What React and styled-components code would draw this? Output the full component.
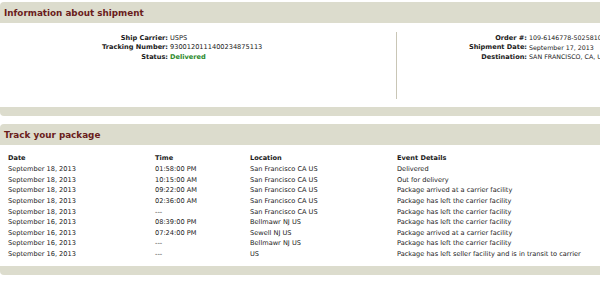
import React from "react";
import styled, { createGlobalStyle } from "styled-components";

const Global = createGlobalStyle`
  html, body { margin: 0; padding: 0; background: #fff; overflow: hidden; }
  body { font-family: "DejaVu Sans", Verdana, sans-serif; color: #1a1a1a; }
`;

const Page = styled.div`
  width: 640px;
  padding-top: 2px;
  display: flex;
  flex-direction: column;
  gap: 8px;
`;

const Panel = styled.section`
  display: flex;
  flex-direction: column;
`;

const Header = styled.div`
  background: #dcdccd;
  height: 21px;
  border-radius: 4px 4px 0 0;
  display: flex;
  align-items: center;
  padding-left: 4px;
`;

const Title = styled.h2`
  margin: 0;
  font-size: 8.8px;
  font-weight: bold;
  color: #6a1c1c;
`;

const Footer = styled.div`
  background: #dcdccd;
  height: 9px;
  border-radius: 0 0 4px 4px;
`;

const InfoBody = styled.div`
  height: 84px;
  display: flex;
  align-items: flex-start;
  padding-top: 9px;
  box-sizing: border-box;
`;

const InfoCol = styled.div`
  width: ${(p) => p.$width}px;
  height: 67px;
  box-sizing: border-box;
  padding-top: 1px;
  border-right: ${(p) => (p.$divider ? "1px solid #c9c6b6" : "none")};
  display: grid;
  grid-template-columns: ${(p) => p.$labelWidth}px auto;
  grid-auto-rows: 9.5px;
  align-content: start;
  align-items: center;
  column-gap: 2px;
  font-size: 6.6px;
`;

const Label = styled.div`
  text-align: right;
  font-weight: bold;
  white-space: nowrap;
`;

const Value = styled.div`
  white-space: nowrap;
  font-size: ${(p) => (p.$small ? "6.3px" : "6.6px")};
  color: ${(p) => (p.$status ? "#2b8a2b" : "#1a1a1a")};
  font-weight: ${(p) => (p.$status ? "bold" : "normal")};
`;

const TrackBody = styled.div`
  padding: 8px 0 7px 8px;
`;

const Table = styled.table`
  border-collapse: collapse;
  font-size: 6.6px;
  & td, & th {
    padding: 0;
    height: 10.65px;
    text-align: left;
    white-space: nowrap;
    vertical-align: middle;
  }
  & th { font-weight: bold; }
`;

const info = {
  left: [
    ["Ship Carrier:", "USPS"],
    ["Tracking Number:", "9300120111400234875113"],
    ["Status:", "Delivered", true],
  ],
  right: [
    ["Order #:", "109-6146778-5025810"],
    ["Shipment Date:", "September 17, 2013"],
    ["Destination:", "SAN FRANCISCO, CA, US"],
  ],
};

const rows = [
  ["September 18, 2013", "01:58:00 PM", "San Francisco CA US", "Delivered"],
  ["September 18, 2013", "10:15:00 AM", "San Francisco CA US", "Out for delivery"],
  ["September 18, 2013", "09:22:00 AM", "San Francisco CA US", "Package arrived at a carrier facility"],
  ["September 18, 2013", "02:36:00 AM", "San Francisco CA US", "Package has left the carrier facility"],
  ["September 18, 2013", "---", "San Francisco CA US", "Package has left the carrier facility"],
  ["September 16, 2013", "08:39:00 PM", "Bellmawr NJ US", "Package has left the carrier facility"],
  ["September 16, 2013", "07:24:00 PM", "Sewell NJ US", "Package arrived at a carrier facility"],
  ["September 16, 2013", "---", "Bellmawr NJ US", "Package has left the carrier facility"],
  ["September 16, 2013", "---", "US", "Package has left seller facility and is in transit to carrier"],
];

export default function App() {
  return (
    <>
      <Global />
      <Page>
        <Panel>
          <Header><Title>Information about shipment</Title></Header>
          <InfoBody>
            <InfoCol $width={397} $labelWidth={168} $divider>
              {info.left.map(([l, v, s]) => (
                <React.Fragment key={l}>
                  <Label>{l}</Label>
                  <Value $status={s}>{v}</Value>
                </React.Fragment>
              ))}
            </InfoCol>
            <InfoCol $width={240} $labelWidth={130}>
              {info.right.map(([l, v]) => (
                <React.Fragment key={l}>
                  <Label>{l}</Label>
                  <Value $small>{v}</Value>
                </React.Fragment>
              ))}
            </InfoCol>
          </InfoBody>
          <Footer />
        </Panel>
        <Panel>
          <Header><Title>Track your package</Title></Header>
          <TrackBody>
            <Table>
              <colgroup>
                <col style={{ width: 147 }} />
                <col style={{ width: 95 }} />
                <col style={{ width: 147 }} />
                <col />
              </colgroup>
              <thead>
                <tr><th>Date</th><th>Time</th><th>Location</th><th>Event Details</th></tr>
              </thead>
              <tbody>
                {rows.map((r, i) => (
                  <tr key={i}>{r.map((c, j) => <td key={j}>{c}</td>)}</tr>
                ))}
              </tbody>
            </Table>
          </TrackBody>
          <Footer />
        </Panel>
      </Page>
    </>
  );
}
